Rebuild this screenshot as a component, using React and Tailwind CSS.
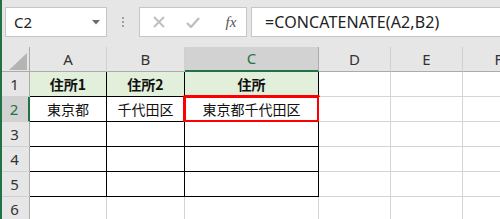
import React from "react";

const cols = [
  { k: "A", w: "w-[77px]" },
  { k: "B", w: "w-[78px]" },
  { k: "C", w: "w-[134px]" },
  { k: "D", w: "w-[72px]" },
  { k: "E", w: "w-[72px]" },
  { k: "F", w: "w-[72px]" },
];

const data = {
  1: { A: "住所1", B: "住所2", C: "住所" },
  2: { A: "東京都", B: "千代田区", C: "東京都千代田区" },
};

const jp = { fontFamily: '"Noto Sans CJK JP", "Noto Sans", sans-serif' };
const latin = { fontFamily: '"Noto Sans", "Liberation Sans", sans-serif' };

function Cell({ row, col }) {
  const inTable = row >= 1 && row <= 5 && ["A", "B", "C"].includes(col.k);
  const rightBlack = inTable;
  const bottomBlack = inTable;
  const bg = row === 1 && inTable ? "bg-[#e2efda]" : "bg-white";
  const text = data[row]?.[col.k] ?? "";
  const bold = row === 1;
  const selected = row === 2 && col.k === "C";
  return (
    <div
      className={`relative ${col.w} shrink-0 h-[25px] ${bg} border-r border-b ${
        rightBlack ? "border-r-black" : "border-r-[#d4d4d4]"
      } ${bottomBlack ? "border-b-black" : "border-b-[#d4d4d4]"} flex items-center justify-center text-[14px] text-[#111] ${
        bold ? "font-bold" : ""
      }`}
      style={jp}
    >
      {text}
      {selected && (
        <div className="absolute left-[-2px] top-[-2px] right-[-2px] bottom-[-2px] border-[3px] border-[#ff0000] rounded-[2px]" />
      )}
    </div>
  );
}

export default function App() {
  return (
    <div className="w-[500px] h-[219px] overflow-hidden bg-[#e6e6e6] relative">
      <div className="absolute left-0 top-0 bottom-0 w-[2px] bg-[#217346] z-10" />
      {/* Formula bar */}
      <div className="h-[47px] flex items-start pt-[7px] pl-[5px]">
        <div className="w-[102px] h-[30px] bg-white border border-[#c6c6c6] flex items-center justify-between pl-[8px] pr-[6px]">
          <span className="text-[15px] text-[#222]" style={latin}>C2</span>
          <svg width="8" height="5" viewBox="0 0 8 5"><path d="M0 0H8L4 4.5Z" fill="#6b6b6b" /></svg>
        </div>
        <div className="w-[32px] h-[30px] flex flex-col items-center justify-center gap-[2px]">
          <div className="w-[2px] h-[2px] bg-[#a0a0a0]" />
          <div className="w-[2px] h-[2px] bg-[#a0a0a0]" />
          <div className="w-[2px] h-[2px] bg-[#a0a0a0]" />
        </div>
        <div className="w-[108px] h-[30px] bg-white border border-[#c6c6c6] flex items-center">
          <div className="w-[38px] flex justify-center">
            <svg width="12" height="12" viewBox="0 0 12 12"><path d="M1 1L11 11M11 1L1 11" stroke="#c0c0c0" strokeWidth="2" /></svg>
          </div>
          <div className="w-[30px] flex justify-center">
            <svg width="14" height="11" viewBox="0 0 14 11"><path d="M1 6L5 10L13 1" stroke="#c0c0c0" strokeWidth="2.4" fill="none" /></svg>
          </div>
          <div className="flex-1 flex justify-center pl-[8px]">
            <span className="italic text-[15px] text-[#555]" style={{ fontFamily: '"Liberation Serif", serif' }}>fx</span>
          </div>
        </div>
        <div className="ml-[4px] flex-1 h-[30px] bg-white border border-[#c6c6c6] border-r-0 flex items-center pl-[13px]">
          <span className="text-[16px] text-[#222] tracking-[0.1px]" style={latin}>=CONCATENATE(A2,B2)</span>
        </div>
      </div>
      {/* Grid */}
      <div className="flex flex-col">
        {/* Column headers */}
        <div className="flex h-[25px]">
          <div className="w-[30px] shrink-0 h-[25px] border-r border-b border-[#ababab] relative bg-[#e6e6e6]">
            <svg className="absolute left-[9px] top-[6px]" width="18" height="17" viewBox="0 0 18 17"><path d="M18 0V17H0Z" fill="#b4b4b4" /></svg>
          </div>
          {cols.map((c) => (
            <div
              key={c.k}
              className={`${c.w} shrink-0 h-[25px] flex items-center justify-center text-[15px] border-r ${
                c.k === "C"
                  ? "bg-[#d2d2d2] text-[#217346] border-b-2 border-b-[#217346] border-r-[#ababab]"
                  : "bg-[#e6e6e6] text-[#333] border-b border-b-[#ababab] border-r-[#d0d0d0]"
              }`}
              style={latin}
            >
              {c.k}
            </div>
          ))}
        </div>
        {[1, 2, 3, 4, 5, 6].map((r) => (
          <div key={r} className="flex h-[25px]">
            <div
              className={`w-[30px] shrink-0 h-[25px] flex items-center justify-center text-[15px] border-b border-b-[#d0d0d0] ${
                r === 2
                  ? "bg-[#d2d2d2] text-[#217346] border-r-2 border-r-[#217346]"
                  : "bg-[#e6e6e6] text-[#333] border-r border-r-[#ababab]"
              }`}
              style={latin}
            >
              {r}
            </div>
            {cols.map((c) => (
              <Cell key={c.k} row={r} col={c} />
            ))}
          </div>
        ))}
      </div>
    </div>
  );
}
